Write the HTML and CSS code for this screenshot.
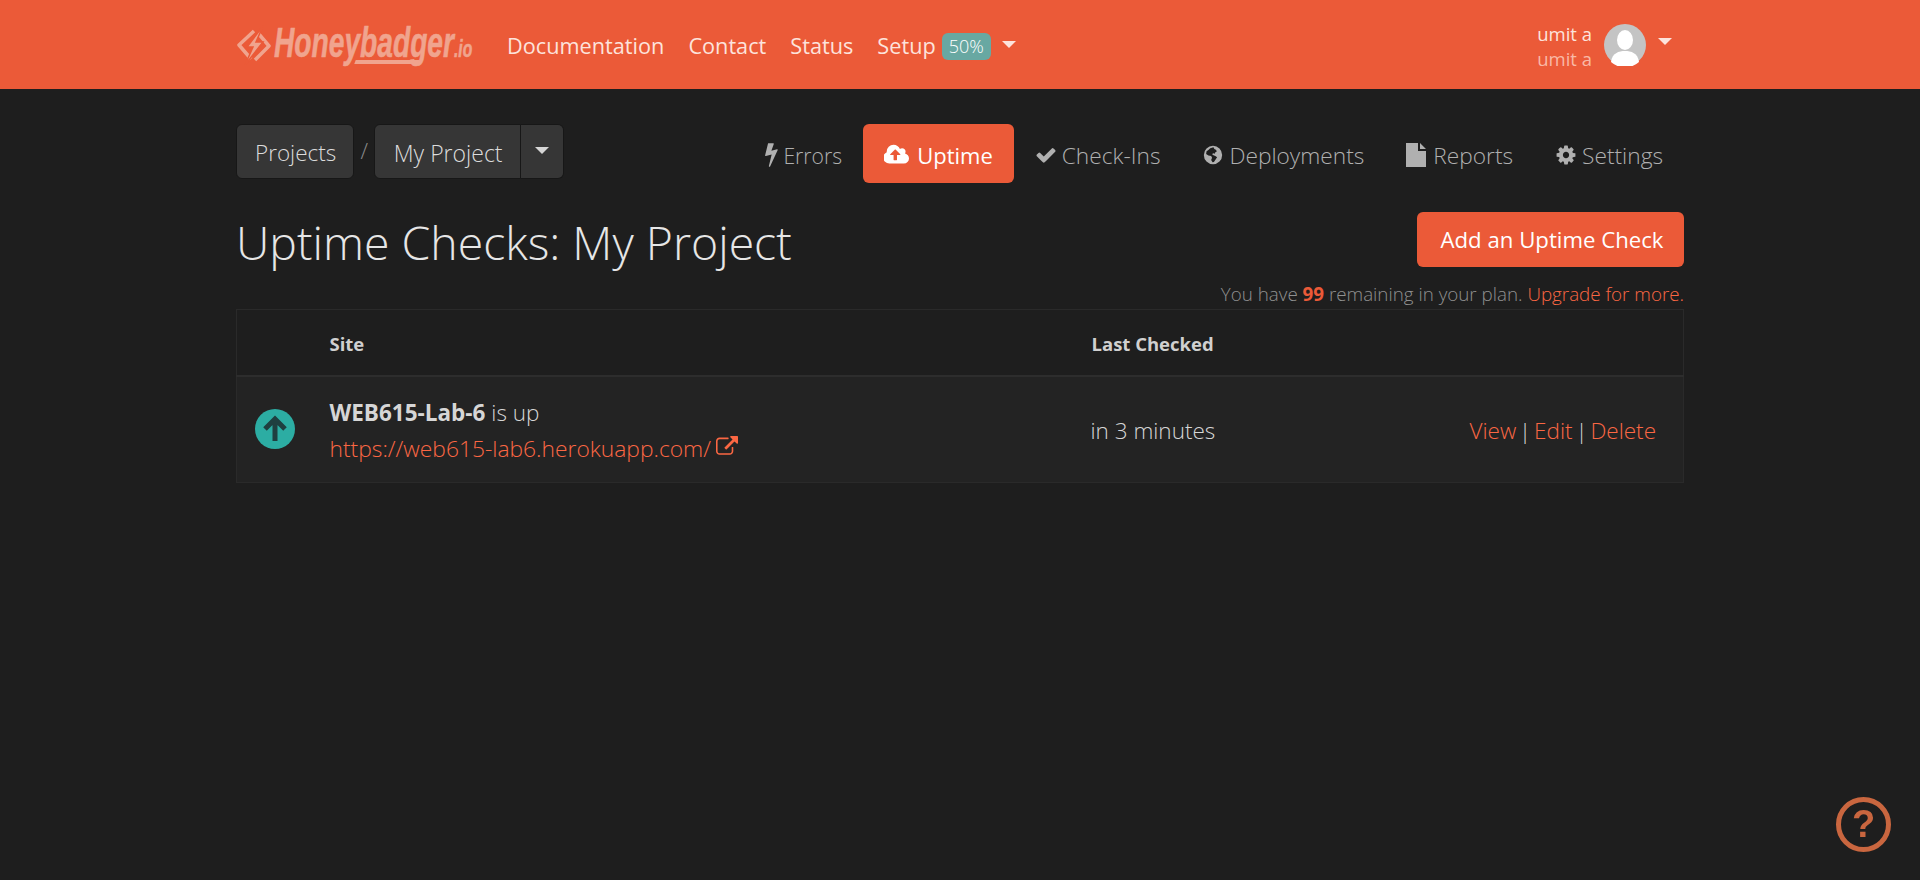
FILE: index.html
```html
<!DOCTYPE html>
<html lang="en">
<head>
<meta charset="utf-8">
<title>Uptime Checks: My Project</title>
<link rel="stylesheet" href="styles.css">
</head>
<body>
<header class="topbar">
  <div class="wrap topbar-inner">
    <a class="logo" href="#">
      <svg class="logo-mark" viewBox="0 0 34 40"><path d="M17 6 2 20l12 14M18 35l14-14-11-13" fill="none" stroke="#f0a48e" stroke-width="3.500" stroke-linejoin="round"/><path d="M26 1 10 22h6L8 40l18-23h-7z" fill="#f0a48e" stroke="#eb5a38" stroke-width="1.500"/></svg>
      <span class="logo-text">Honeybadger<small>.io</small></span>
      <span class="logo-tail"></span>
    </a>
    <nav class="mainnav">
      <a href="#">Documentation</a>
      <a href="#">Contact</a>
      <a href="#">Status</a>
      <a class="setup" href="#">Setup<span class="badge">50%</span><i class="caret caret-nav"></i></a>
    </nav>
    <div class="user">
      <div class="user-names"><span>umit a</span><span class="user-second">umit a</span></div>
      <svg class="avatar" viewBox="0 0 42 42"><circle cx="21" cy="21" r="21" fill="#c4c4c4"/><ellipse cx="21" cy="16" rx="8" ry="10" fill="#fff"/><path d="M7 38c1-9 8-11 14-11s13 2 14 11a21 21 0 0 1-28 0z" fill="#fff"/></svg>
      <i class="caret caret-nav"></i>
    </div>
  </div>
</header>

<main class="wrap">
  <div class="subnav">
    <div class="crumbs">
      <a class="crumb crumb-projects" href="#">Projects</a>
      <span class="crumb-sep">/</span>
      <div class="crumb-group">
        <a class="crumb crumb-main" href="#">My Project</a>
        <a class="crumb crumb-toggle" href="#"><i class="caret caret-crumb"></i></a>
      </div>
    </div>
    <nav class="tabs">
      <a class="tab tab-errors" href="#"><svg class="ico ico-bolt" viewBox="440 128 920 1664"><path d="M1333 566q18 20 7 44l-540 1157q-13 25-42 25-4 0-14-2-17-5-25.500-19t-4.500-30l197-808-406 101q-4 1-12 1-18 0-31-11-18-15-13-39l201-825q4-14 16-23t28-9h328q19 0 32 12.500t13 29.500q0 8-5 18l-171 463 396-98q8-2 12-2 19 0 34 15z"/></svg>Errors</a>
      <a class="tab tab-active" href="#"><svg class="ico ico-cloud" viewBox="0 0 1920 1792"><path d="M1216 864q0-14-9-23l-352-352q-9-9-23-9t-23 9l-351 351q-10 12-10 24 0 14 9 23t23 9h224v352q0 13 9.500 22.500t22.500 9.500h192q13 0 22.500-9.500t9.500-22.500v-352h224q13 0 22.500-9.500t9.500-22.500zm640 288q0 159-112.500 271.500t-271.500 112.500h-1088q-185 0-316.500-131.500t-131.500-316.500q0-130 70-240t188-165q-2-30-2-43 0-212 150-362t362-150q156 0 285.500 87t188.500 231q71-62 166-62 106 0 181 75t75 181q0 76-41 138 130 31 213.500 135.500t83.500 238.500z"/></svg>Uptime</a>
      <a class="tab" href="#"><svg class="ico" viewBox="0 0 1792 1792"><path d="M1671 566q0 40-28 68l-724 724-136 136q-28 28-68 28t-68-28l-136-136-362-362q-28-28-28-68t28-68l136-136q28-28 68-28t68 28l294 295 656-657q28-28 68-28t68 28l136 136q28 28 28 68z"/></svg>Check-Ins</a>
      <a class="tab" href="#"><svg class="ico" viewBox="0 0 24 24"><path fill-rule="evenodd" d="M12 2a10 10 0 1 1 0 20 10 10 0 0 1 0-20zM9 4.500 7 6.500 5 8 4.500 11l2.500 1.500 3 .5 1 2-1 2.500 1.500 2.500 1.500-.5 2-3 1.500-2-2-1.500-2.500-1-1-1 1.500-1 1.500.5.500-1.500 1.500-.5-.5-2-2-1-1-2z"/></svg>Deployments</a>
      <a class="tab" href="#"><svg class="ico ico-file" viewBox="0 0 20 24"><path d="M0 0h12v8h8v16H0zM14 0l6 6h-6z"/></svg>Reports</a>
      <a class="tab" href="#"><svg class="ico" viewBox="0 0 1792 1792"><path d="M1152 896q0-106-75-181t-181-75-181 75-75 181 75 181 181 75 181-75 75-181zm512-109v222q0 12-8 23t-20 13l-185 28q-19 54-39 91 35 50 107 138 10 12 10 25t-9 23q-27 37-99 108t-94 71q-12 0-26-9l-138-108q-44 23-91 38-16 136-29 186-7 28-36 28h-222q-14 0-24.500-8.500t-11.500-21.500l-28-184q-49-16-90-37l-141 107q-10 9-25 9-14 0-25-11-126-114-165-168-7-10-7-23 0-12 8-23 15-21 51-66.500t54-70.500q-27-50-41-99l-183-27q-13-2-21-12.500t-8-23.500v-222q0-12 8-23t19-13l186-28q14-46 39-92-40-57-107-138-10-12-10-24 0-10 9-23 26-36 98.500-107.500t94.500-71.500q13 0 26 10l138 107q44-23 91-38 16-136 29-186 7-28 36-28h222q14 0 24.500 8.500t11.500 21.500l28 184q49 16 90 37l142-107q9-9 24-9 13 0 25 10 129 119 165 170 7 8 7 22 0 12-8 23-15 21-51 66.500t-54 70.500q26 50 41 98l183 28q13 2 21 12.500t8 23.500z"/></svg>Settings</a>
    </nav>
  </div>

  <div class="titlebar">
    <h1>Uptime Checks: My Project</h1>
    <a class="btn-primary" href="#">Add an Uptime Check</a>
  </div>
  <p class="plan">You have <strong>99</strong> remaining in your plan. <a href="#">Upgrade for more.</a></p>

  <table class="checks">
    <colgroup><col class="col-icon"><col class="col-site"><col class="col-last"><col></colgroup>
    <thead>
      <tr><th></th><th>Site</th><th>Last Checked</th><th></th></tr>
    </thead>
    <tbody>
      <tr>
        <td class="cell-icon"><svg class="status" viewBox="0 0 40 40"><circle cx="20" cy="20" r="20" fill="#2cada3"/><path d="M20 32V10M10 20 20 10 30 20" fill="none" stroke="#1f3f40" stroke-width="5"/></svg></td>
        <td class="cell-site">
          <div class="site-name"><strong>WEB615-Lab-6</strong> is up</div>
          <a class="site-url" href="#">https://web615-lab6.herokuapp.com/<svg class="ext" viewBox="0 0 1792 1792"><path d="M1408 928v320q0 119-84.500 203.500t-203.500 84.500h-832q-119 0-203.500-84.500t-84.500-203.500v-832q0-119 84.500-203.500t203.500-84.500h704q14 0 23 9t9 23v64q0 14-9 23t-23 9h-704q-66 0-113 47t-47 113v832q0 66 47 113t113 47h832q66 0 113-47t47-113v-320q0-14 9-23t23-9h64q14 0 23 9t9 23zm384-864v512q0 26-19 45t-45 19-45-19l-176-176-652 652q-10 10-23 10t-23-10l-114-114q-10-10-10-23t10-23l652-652-176-176q-19-19-19-45t19-45 45-19h512q26 0 45 19t19 45z"/></svg></a>
        </td>
        <td>in 3 minutes</td>
        <td class="cell-actions"><a href="#">View</a> | <a href="#">Edit</a> | <a href="#">Delete</a></td>
      </tr>
    </tbody>
  </table>
</main>

<a class="help" href="#">?</a>
</body>
</html>
```
FILE: styles.css
```css
* { box-sizing: border-box; }
html, body { margin: 0; padding: 0; }
body {
  min-height: 880px;
  background: #1e1e1e;
  color: #d6d6d6;
  font-family: "Open Sans", "Noto Sans", sans-serif;
  font-size: 22px;
  font-weight: 300;
  overflow: hidden;
}
a { text-decoration: none; color: #fb6743; font-weight: 300; }
.wrap { width: 1448px; margin: 0 auto; }

.topbar { height: 89px; background: #eb5a38; }
.topbar-inner { height: 89px; display: flex; align-items: center; }
.logo { position: relative; display: flex; align-items: center; gap: 3px; width: 270px; margin-left: 1px; height: 42px; flex: none; }
.logo-mark { width: 34px; height: 40px; flex: none; }
.logo-text {
  font-family: "Liberation Sans", sans-serif;
  font-weight: 700;
  font-style: italic;
  font-size: 43px;
  line-height: 42px;
  margin-top: 1px;
  color: #f0a48e;
  -webkit-text-stroke: 0.6px #f0a48e;
  transform: scaleX(0.655);
  transform-origin: left center;
  white-space: nowrap;
}
.logo-text small { font-size: 24px; }
.logo-tail { position: absolute; left: 118px; top: 36px; width: 64px; height: 4px; background: #f0a48e; transform: skewX(-20deg); }
.mainnav { display: flex; align-items: center; gap: 24px; font-size: 21.7px; padding-top: 2px; }
.mainnav a { color: #fde3dc; font-weight: 400; white-space: nowrap; display: flex; align-items: center; }
.badge {
  background: #68a8a2;
  color: #fff;
  font-size: 18px;
  font-weight: 300;
  height: 27px;
  line-height: 27px;
  padding: 0 7px;
  border-radius: 6px;
  margin-left: 6px;
  margin-top: 1px;
}
.caret { display: inline-block; width: 0; height: 0; border-left: 7px solid transparent; border-right: 7px solid transparent; }
.caret-nav { border-top: 7px solid #fde3dc; margin-left: 11px; margin-top: -2px; }
.user { margin-left: auto; display: flex; align-items: center; padding-right: 12px; }
.user-names { display: flex; flex-direction: column; color: #fde3dc; font-size: 18.5px; line-height: 25px; font-weight: 400; padding-top: 2px; }
.user-second { color: #f9b8a6; }
.avatar { width: 42px; height: 42px; margin-left: 12px; }
.user .caret-nav { margin-left: 12px; margin-top: -6px; }

.subnav { display: flex; justify-content: space-between; padding-top: 35px; height: 123px; }
.crumbs { display: flex; align-items: flex-start; color: #8a8a8a; }
.crumb {
  background: #363636;
  border: 1px solid #171717;
  border-radius: 6px;
  color: #dcdcdc;
  height: 55px;
  padding: 2px 18px 0;
  display: flex;
  align-items: center;
  font-size: 22.5px;
  font-weight: 300;
}
.crumb-projects { padding-right: 17px; }
.crumb-sep { width: 20px; text-align: center; line-height: 53px; font-size: 22px; }
.crumb-group { display: flex; }
.crumb-main { border-radius: 6px 0 0 6px; padding: 2px 17px 0 18.5px; font-size: 23px; }
.crumb-toggle { border-radius: 0 6px 6px 0; border-left: 0; padding: 0 14px; }
.caret-crumb { border-top: 7px solid #d6d6d6; margin-top: -3px; }
.tabs { display: flex; align-items: flex-start; }
.tab {
  height: 59px;
  padding: 3px 21px 0;
  display: flex;
  align-items: center;
  color: #b0b0b0;
  border-radius: 6px;
  font-size: 22.7px;
  font-weight: 300;
  white-space: nowrap;
}
.tab-errors { font-size: 21.2px; }
.tab-active { background: #eb5a38; color: #fff; font-weight: 400; font-size: 22px; }
.ico { width: 22px; height: 22px; fill: currentColor; margin-right: 5px; flex: none; }
.ico-bolt { width: 13px; height: 24px; }
.ico-cloud { width: 26px; height: 24px; margin-right: 7px; }
.ico-file { width: 20px; height: 24px; margin-right: 7px; }

.titlebar { display: flex; justify-content: space-between; align-items: flex-start; }
h1 { margin: 0; font-size: 46.4px; font-weight: 300; line-height: 60px; color: #e6e6e6; white-space: nowrap; }
.btn-primary {
  width: 267px;
  height: 55px;
  padding-left: 3px;
  background: #eb5a38;
  color: #fff;
  border-radius: 6px;
  font-size: 22.2px;
  font-weight: 400;
  display: flex;
  align-items: center;
  justify-content: center;
}
.plan { margin: 10px 0 0 0; padding-bottom: 1px; height: 27px; line-height: 25px; text-align: right; font-size: 18.8px; color: #909090; }
.plan strong { color: #eb5a38; font-weight: 700; }

.checks { width: 1448px; margin-top: 0; border-collapse: collapse; table-layout: fixed; border: 1px solid #2a2a2a; }
.col-icon { width: 92px; }
.col-site { width: 762px; }
.col-last { width: 300px; }
.checks th { height: 66px; padding-top: 3px; text-align: left; font-size: 18.5px; font-weight: 700; color: #d0d0d0; border-bottom: 2px solid #2d2d2d; }
.checks td { height: 107px; background: #232323; color: #d6d6d6; font-size: 22.5px; padding: 2px 0 0; }
.checks .cell-site { padding: 4px 0 0 1px; }
.cell-icon { padding: 0 0 0 18px !important; }
.status { width: 40px; height: 40px; display: block; }
.site-name { line-height: 36px; }
.site-name strong { font-weight: 700; }
.site-url { line-height: 36px; display: flex; align-items: center; font-size: 22.8px; }
.ext { width: 22px; height: 22px; fill: currentColor; margin-left: 5px; margin-top: -4px; }
.cell-actions { text-align: right; padding-right: 27px !important; white-space: nowrap; word-spacing: -3px; }

.help {
  position: fixed;
  right: 29px;
  bottom: 28px;
  width: 55px;
  height: 55px;
  border: 5px solid #c9663f;
  border-radius: 50%;
  color: #c9663f;
  font-family: "Liberation Sans", sans-serif;
  font-size: 38px;
  font-weight: 700;
  line-height: 45px;
  text-align: center;
}
```
